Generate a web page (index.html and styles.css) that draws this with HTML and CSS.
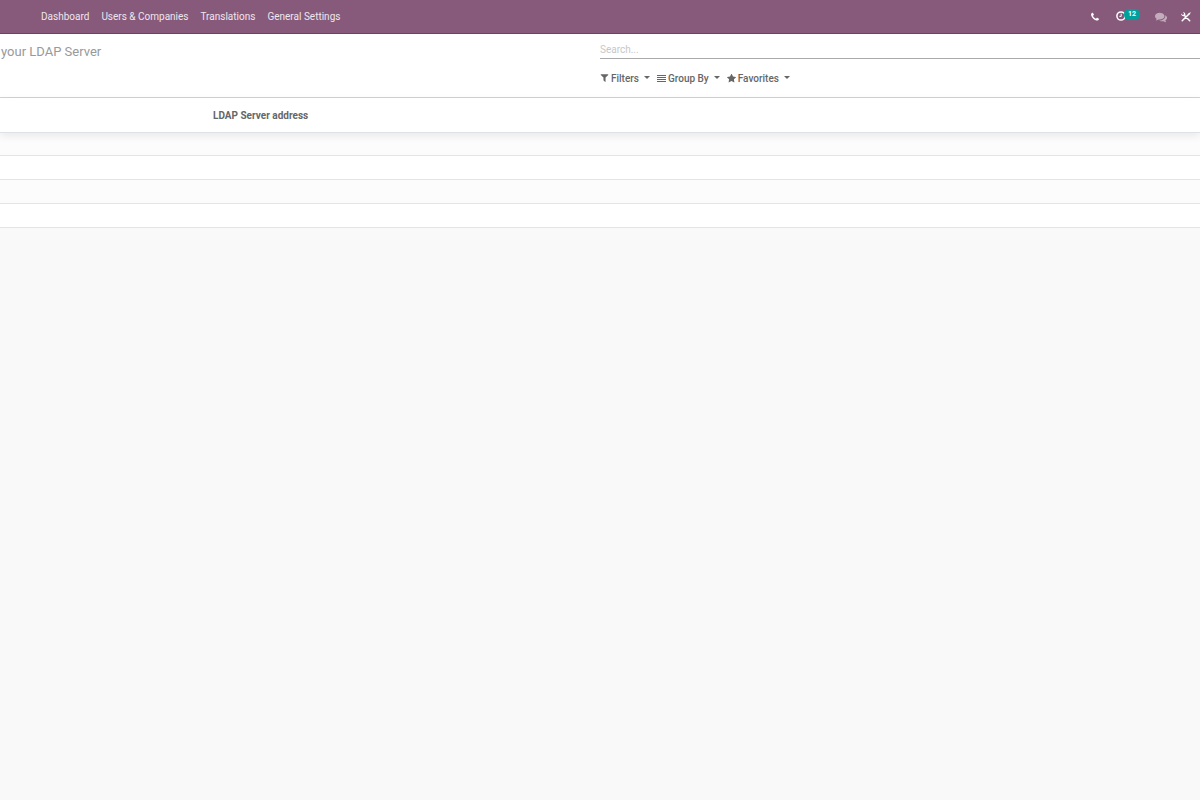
FILE: index.html
```html
<!DOCTYPE html>
<html lang="en">
<head>
<meta charset="utf-8">
<title>LDAP Server</title>
<link rel="stylesheet" href="styles.css">
</head>
<body>
<header class="navbar">
  <nav class="menu">
    <a href="#">Dashboard</a>
    <a href="#">Users &amp; Companies</a>
    <a href="#">Translations</a>
    <a href="#">General Settings</a>
  </nav>
  <div class="systray">
    <button class="tray phone" type="button" aria-label="Phone"><svg width="10" height="10" viewBox="0 0 1792 1792"><path d="M1600 1240q0 27-10 70.500t-21 68.500q-21 50-122 106-94 51-186 51-27 0-53-3.500t-57.500-12.500-47-14.500-55.500-20.500-49-18q-98-35-175-83-127-79-264-216t-216-264q-48-77-83-175-3-9-18-49t-20.500-55.500-14.500-47-12.500-57.500-3.500-53q0-92 51-186 56-101 106-122 25-11 68.500-21t70.500-10q14 0 21 3 18 6 53 76 11 19 30 54t35 63.500 31 53.500q3 4 17.500 25t21.500 35.500 7 28.500q0 20-28.500 50t-62 55-62 53-28.500 46q0 9 5 22.500t8.500 20.500 14 24 11.500 19q76 137 174 235t235 174q2 1 19 11.500t24 14 20.500 8.500 22.500 5q18 0 46-28.500t53-62 55-62 50-28.500q14 0 28.500 7t35.500 21.500 25 17.500q25 15 53.500 31t63.500 35 54 30q70 35 76 53 3 7 3 21z"/></svg></button>
    <button class="tray activities" type="button" aria-label="Activities"><svg width="10" height="10" viewBox="0 0 10 10"><circle cx="5" cy="5" r="4.1" fill="none" stroke="#fff" stroke-width="1.5"/><path d="M5.200 2.700v2.700H3.400" fill="none" stroke="#fff"/></svg><span class="badge">12</span></button>
    <button class="tray chat" type="button" aria-label="Conversations"><svg width="12" height="12" viewBox="0 0 1792 1792"><path d="M1408 768q0 139-94 257t-256.500 186.500-353.500 68.500q-86 0-176-16-124 88-278 128-36 9-86 16h-3q-11 0-20.500-8t-11.500-21q-1-3-1-6.500t.5-6.500 2-6l2.500-5 3.500-5.500 4-5 4.500-5 4-4.500q5-6 23-25t26-29.500 22.500-29 25-38.500 20.500-44q-124-72-195-177t-71-224q0-139 94-257t256.500-186.500 353.500-68.500 353.500 68.500 256.500 186.500 94 257zm384 256q0 120-71 224.500t-195 176.500q10 24 20.500 44t25 38.500 22.500 29 26 29.500 23 25q1 1 4 4.500t4.500 5 4 5 3.500 5.500l2.500 5 2 6 .5 6.500-1 6.500q-3 14-13 22t-22 7q-50-7-86-16-154-40-278-128-90 16-176 16-271 0-472-132 58 4 88 4 161 0 309-45t264-129q125-92 192-212t67-254q0-77-23-152 129 71 204 178t75 230z"/></svg></button>
    <button class="tray tools" type="button" aria-label="Developer tools"><svg width="10" height="10" viewBox="0 0 10 10"><path d="M1.200 8.800L8 2M3 3l5.700 5.700" fill="none" stroke="#fff" stroke-width="1.500" stroke-linecap="round"/><path d="M.3 1.600L1.700 3l1.300-.1L3 1.500 1.800.3C3.300-.1 4.700 1 4.300 2.900L3 4.300C1.300 4.600 0 3.300.3 1.600zM7.200 1.800L9.200.2l.6.600-1.600 2z"/></svg></button>
  </div>
</header>
<section class="control-panel">
  <h1 class="title">your LDAP Server</h1>
  <div class="search">
    <input class="search-input" type="search" placeholder="Search..." aria-label="Search">
    <div class="options">
      <button type="button"><svg width="9" height="9" viewBox="64 192 1664 1664"><path d="M1595 295q17 41-14 70l-493 493v742q0 42-39 59-13 5-25 5-27 0-45-19l-256-256q-19-19-19-45v-486l-493-493q-31-29-14-70 17-39 59-39h1280q42 0 59 39z"/></svg><span>Filters</span><i class="caret"></i></button>
      <button type="button"><svg width="9" height="9" viewBox="0 0 9 9"><path d="M0 1h9v1H0zM0 3h9v1H0zM0 5h9v1H0zM0 7h9v1H0z"/></svg><span>Group By</span><i class="caret"></i></button>
      <button type="button"><svg width="9" height="9" viewBox="64 64 1664 1664"><path d="M1728 647q0 22-26 48l-363 354 86 500q1 7 1 20 0 21-10.500 35.500t-30.500 14.500q-19 0-40-12l-449-236-449 236q-22 12-40 12-21 0-31.500-14.500t-10.500-35.500q0-6 2-20l86-500-364-354q-25-27-25-48 0-37 56-46l502-73 225-455q19-41 49-41t49 41l225 455 502 73q56 9 56 46z"/></svg><span>Favorites</span><i class="caret"></i></button>
    </div>
  </div>
</section>
<main>
  <table class="list">
    <thead><tr><th scope="col">LDAP Server address</th></tr></thead>
    <tbody>
      <tr><td></td></tr>
      <tr><td></td></tr>
      <tr><td></td></tr>
      <tr><td></td></tr>
    </tbody>
  </table>
</main>
</body>
</html>
```
FILE: styles.css
```css
* { box-sizing: border-box; }
body {
  margin: 0;
  background: #f9f9f9;
  color: #666;
  font: 10px/16px Roboto, sans-serif;
}
button {
  display: flex;
  align-items: center;
  padding: 0;
  border: 0;
  background: none;
  color: inherit;
  font: inherit;
}
svg { display: block; fill: currentColor; }
.navbar {
  display: flex;
  justify-content: space-between;
  align-items: center;
  height: 34px;
  padding: 0 9px 0 41px;
  background: #875a7b;
  border-bottom: 1px solid #68465f;
}
.menu { display: flex; gap: 12px; }
.menu a { color: #eee5ec; text-decoration: none; }
.systray { display: flex; align-items: center; color: #fff; }
.activities { margin-left: 16px; }
.activities svg { margin-top: -1px; }
.badge {
  z-index: 1;
  margin: -5px 0 0 -2px;
  padding: 0 4px;
  border-radius: 5px;
  background: #00a09d;
  font-size: 7px;
  font-weight: 700;
  line-height: 11px;
}
.chat { margin-left: 15px; opacity: .5; }
.tools { margin-left: 14px; padding-top: 1px; }
.control-panel {
  display: grid;
  grid-template-columns: 1fr 1fr;
  height: 64px;
  background: #fff;
  border-bottom: 1px solid #d2d2d2;
}
.title {
  margin: 0;
  padding: 8px 1px;
  color: #999;
  font-size: 13px;
  line-height: 20px;
  font-weight: 400;
}
.search { padding-top: 6px; }
.search-input {
  display: block;
  width: 100%;
  height: 19px;
  padding: 1px 0 0;
  border: 0;
  border-bottom: 1px solid #aaa;
  border-radius: 0;
  outline: 0;
  appearance: none;
  background: none;
  color: #666;
  font: inherit;
}
.search-input::placeholder { color: #c8c8c8; opacity: 1; }
.options { display: flex; gap: 7px; padding: 12px 0 0; font-weight: 500; }
.options span { margin: 0 5px 0 2px; }
.options svg { margin-top: -1px; }
.caret {
  margin-bottom: 3px;
  border: 3px solid transparent;
  border-top-color: #666;
  border-bottom: 0;
}
.list { width: 100%; border-collapse: separate; border-spacing: 0; background: #fff; }
.list th {
  position: relative;
  height: 35px;
  padding: 1px 0 0 213px;
  border-bottom: 1px solid #dee2e6;
  box-shadow: 0 3px 8px rgba(0, 0, 0, .08);
  text-align: left;
  font-weight: 700;
}
.list td { height: 24px; padding: 0; border-bottom: 1px solid #e4e4e4; }
.list tbody tr:first-child td { height: 23px; }
.list tbody tr:nth-child(odd) { background: #fcfcfc; }
```
